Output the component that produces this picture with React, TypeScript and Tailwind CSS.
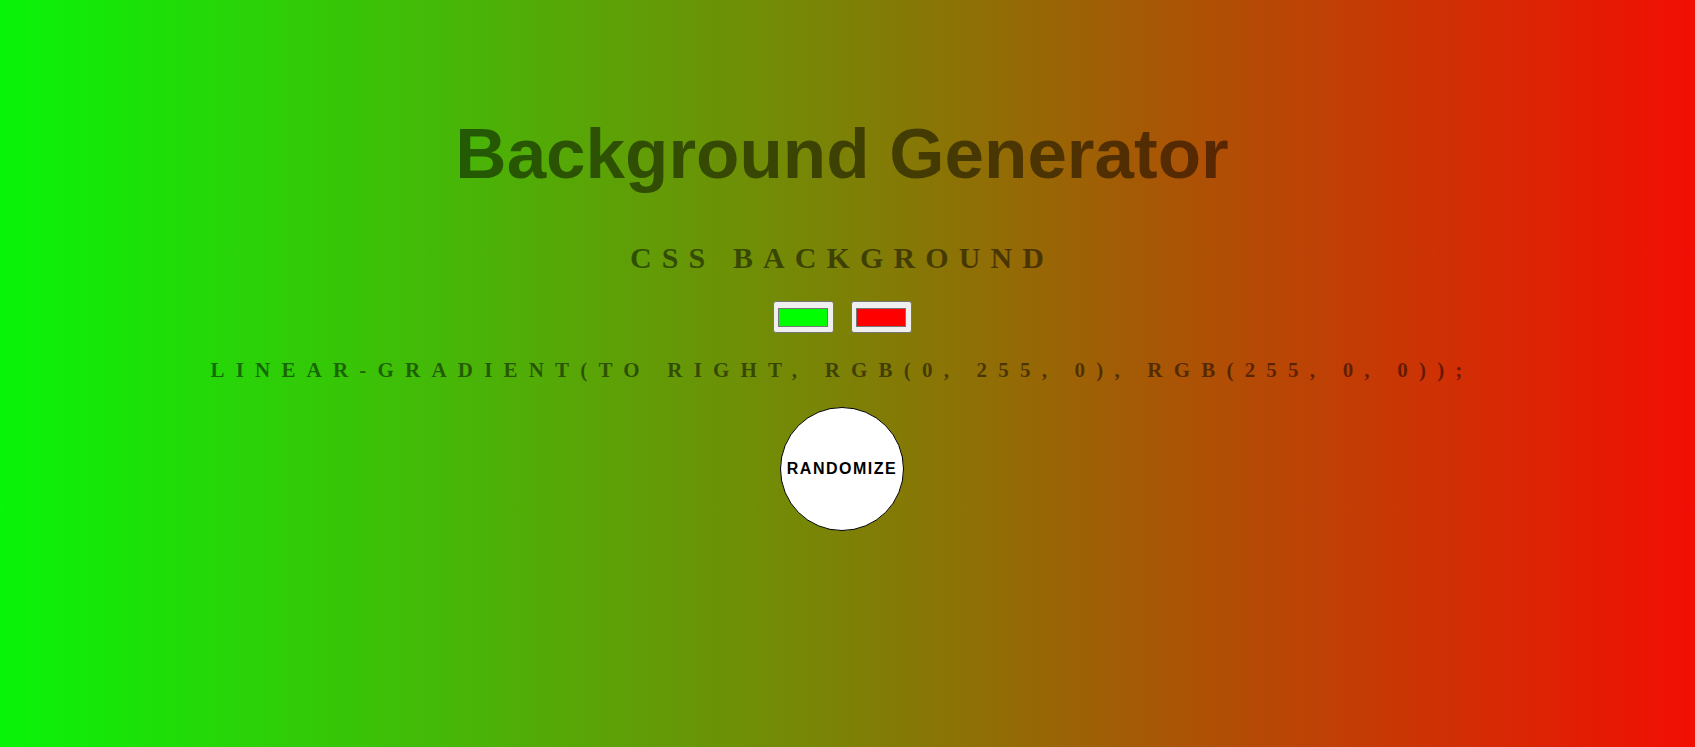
import React from 'react';

const ColorSwatch = ({ color }: { color: string }) => (
  <div className="w-[61px] h-[32px] bg-[#efefef] border border-[#767676] rounded-[3px] flex items-center justify-center">
    <div className="w-[50px] h-[19px] border border-[#777777]" style={{ backgroundColor: color }} />
  </div>
);

const App = () => {
  return (
    <div className="min-h-screen w-full bg-[linear-gradient(to_right,rgb(8,244,8),rgb(242,14,4))]">
      <div className="flex flex-col items-center pt-[114px] pr-[11px] text-[rgba(0,0,0,0.5)]">
        <h1 className="h-[80px] leading-[80px] text-[71px] font-bold font-['Liberation_Sans',Arial,sans-serif]">
          Background Generator
        </h1>

        <h3 className="mt-[47px] h-[34px] leading-[34px] text-[30px] font-bold uppercase tracking-[10.1px] font-['Liberation_Serif','Times_New_Roman',serif]">
          CSS Background
        </h3>

        <div className="mt-[26px] flex gap-[17px]">
          <ColorSwatch color="#00ff00" />
          <ColorSwatch color="#ff0000" />
        </div>

        <h3 className="mt-[25px] h-[24px] leading-[24px] text-[21px] font-bold uppercase tracking-[11.2px] whitespace-nowrap font-['Liberation_Serif','Times_New_Roman',serif]">
          linear-gradient(to right, rgb(0, 255, 0), rgb(255, 0, 0));
        </h3>

        <button className="mt-[25px] w-[124px] h-[124px] rounded-full bg-white border border-black text-black text-[16px] font-bold tracking-[1.5px] font-['Liberation_Sans',Arial,sans-serif]">
          RANDOMIZE
        </button>
      </div>
    </div>
  );
};

export default App;
